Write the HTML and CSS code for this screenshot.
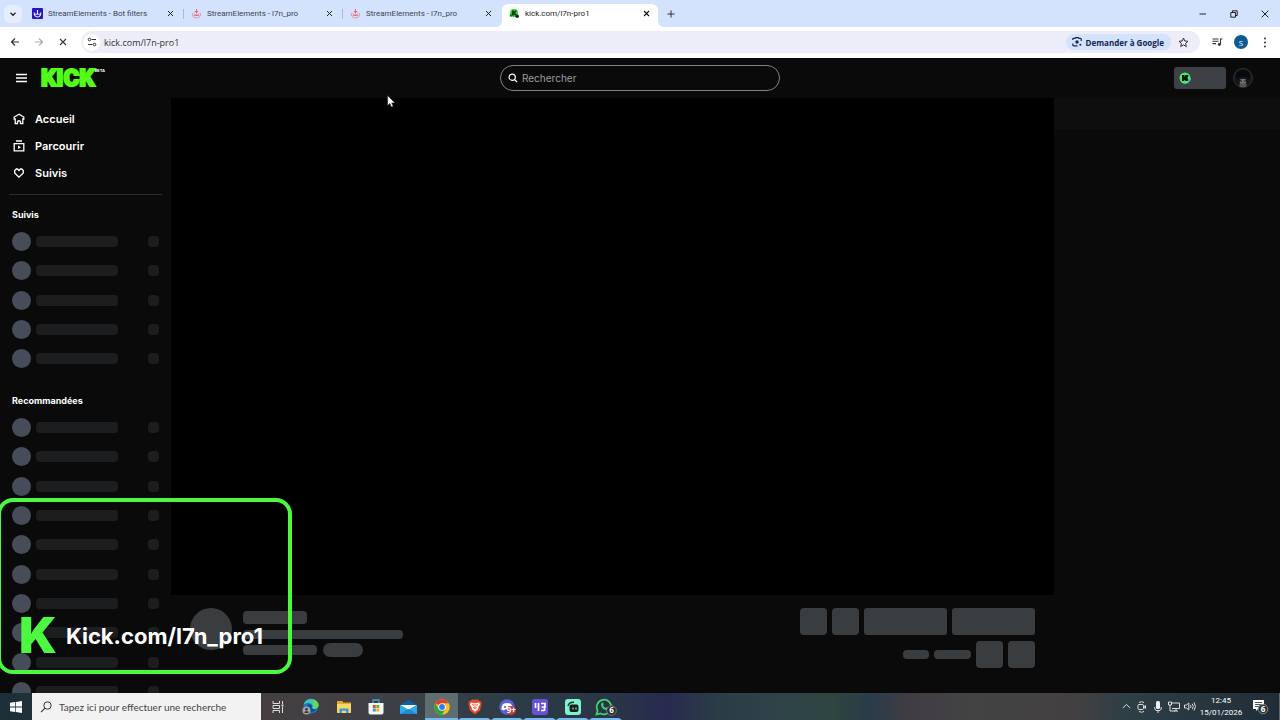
FILE: index.html
```html
<!DOCTYPE html>
<html lang="fr">
<head>
    <meta charset="UTF-8">
    <meta name="viewport" content="width=device-width, initial-scale=1.0">
    <title>kick.com/l7n-pro1</title>
    <link rel="stylesheet" href="styles.css">
</head>
<body>
    <!-- browser tabs -->
    <div class="tabstrip">
        <button class="tab-search" aria-label="Rechercher dans les onglets">
            <svg width="8" height="8" viewBox="0 0 8 8"><path d="M1.5 2.8 4 5.3 6.5 2.8" fill="none" stroke="#222" stroke-width="1.3"/></svg>
        </button>
        <div class="tab">
            <svg width="11" height="11" viewBox="0 0 11 11"><rect width="11" height="11" rx="1" fill="#2a14c4"/><path d="M5.5 2v4M2.4 4.5a3.3 3.3 0 1 0 6.2 0" fill="none" stroke="#fff" stroke-width="1.1"/><path d="M3 6.2h5" stroke="#fff" stroke-width=".9"/></svg>
            <span class="tab-title">StreamElements - Bot filters</span>
            <button class="tab-close" aria-label="Fermer"><svg width="7" height="7" viewBox="0 0 7 7"><path d="M1 1l5 5M6 1L1 6" stroke="#222" stroke-width="1"/></svg></button>
        </div>
        <div class="tab">
            <svg width="11" height="11" viewBox="0 0 11 11"><path d="M5.5 1v4.5M3.8 3.7h3.4" stroke="#ee5a68" stroke-width="1"/><path d="M2.2 4.8C0 7.6 2.5 9.8 5.5 9.8S11 7.6 8.8 4.8" fill="none" stroke="#ee8a94" stroke-width="1"/><path d="M2.8 7.2h5.4" stroke="#ee5a68" stroke-width="1.2"/></svg>
            <span class="tab-title">StreamElements - l7n_pro</span>
            <button class="tab-close" aria-label="Fermer"><svg width="7" height="7" viewBox="0 0 7 7"><path d="M1 1l5 5M6 1L1 6" stroke="#222" stroke-width="1"/></svg></button>
        </div>
        <div class="tab tab-last">
            <svg width="11" height="11" viewBox="0 0 11 11"><path d="M5.5 1v4.5M3.8 3.7h3.4" stroke="#ee5a68" stroke-width="1"/><path d="M2.2 4.8C0 7.6 2.5 9.8 5.5 9.8S11 7.6 8.8 4.8" fill="none" stroke="#ee8a94" stroke-width="1"/><path d="M2.8 7.2h5.4" stroke="#ee5a68" stroke-width="1.2"/></svg>
            <span class="tab-title">StreamElements - l7n_pro</span>
            <button class="tab-close" aria-label="Fermer"><svg width="7" height="7" viewBox="0 0 7 7"><path d="M1 1l5 5M6 1L1 6" stroke="#222" stroke-width="1"/></svg></button>
        </div>
        <div class="tab tab-active">
            <svg width="11" height="11" viewBox="0 0 11 11"><circle cx="5" cy="5" r="4" fill="#2fd636"/><path d="M3 2.5h1.8v1.5L6.5 2.5H8L6.2 5 8 7.5H6L4.8 6v1.5H3z" fill="#0a3a10"/><circle cx="8.2" cy="8.2" r="1.8" fill="#222"/><circle cx="2" cy="7.5" r="1.3" fill="#157a1c"/></svg>
            <span class="tab-title">kick.com/l7n-pro1</span>
            <button class="tab-close" aria-label="Fermer"><svg width="7" height="7" viewBox="0 0 7 7"><path d="M1 1l5 5M6 1L1 6" stroke="#111" stroke-width="1.1"/></svg></button>
        </div>
        <button class="tab-new" aria-label="Nouvel onglet"><svg width="8" height="8" viewBox="0 0 8 8"><path d="M4 .5v7M.5 4h7" stroke="#333" stroke-width="1"/></svg></button>
        <div class="window-buttons">
            <button aria-label="Réduire"><svg width="8" height="8" viewBox="0 0 8 8"><path d="M.5 4h6.5" stroke="#222" stroke-width="1"/></svg></button>
            <button aria-label="Agrandir"><svg width="8" height="8" viewBox="0 0 8 8"><path d="M.8 2.5h4.7v4.7H.8zM2.5 2.5V.8h4.7v4.7H5.5" fill="none" stroke="#222" stroke-width="1"/></svg></button>
            <button aria-label="Fermer"><svg width="8" height="8" viewBox="0 0 8 8"><path d="M.7.7l6.6 6.6M7.3.7L.7 7.3" stroke="#222" stroke-width="1"/></svg></button>
        </div>
    </div>

    <!-- address bar -->
    <div class="toolbar">
        <button aria-label="Retour"><svg width="10" height="10" viewBox="0 0 10 10"><path d="M9 5H1.5M5 1.5L1.5 5 5 8.5" fill="none" stroke="#333" stroke-width="1.2"/></svg></button>
        <button aria-label="Suivant"><svg width="10" height="10" viewBox="0 0 10 10"><path d="M1 5h7.5M5 1.5L8.5 5 5 8.5" fill="none" stroke="#a9abb0" stroke-width="1.2"/></svg></button>
        <button aria-label="Arrêter"><svg width="10" height="10" viewBox="0 0 10 10"><path d="M2 2l6 6M8 2L2 8" stroke="#333" stroke-width="1.1"/></svg></button>
        <div class="omnibox">
            <button class="site-info" aria-label="Informations sur le site"><svg width="10" height="10" viewBox="0 0 10 10"><path d="M4.5 2.5h4.5M1 7.5h4.5" stroke="#333" stroke-width="1.1"/><circle cx="2.500" cy="2.500" r="1.300" fill="none" stroke="#333"/><circle cx="7.500" cy="7.500" r="1.300" fill="none" stroke="#333"/></svg></button>
            <input class="url" type="text" value="kick.com/l7n-pro1" aria-label="Adresse">
            <button class="ask">
                <svg width="10" height="10" viewBox="0 0 10 10"><path d="M.8 3V2.200Q.8 1.300 1.700 1.300H3L3.600.6h2.800L7 1.300h1.300q.9 0 .9.900V4M.8 6.500v1.300q0 1 1 1H5.500" fill="none" stroke="#14264e" stroke-width="1.2"/><circle cx="5" cy="5" r="1.7" fill="#14264e"/><circle cx="8.3" cy="7.8" r="1" fill="#14264e"/></svg>
                <span>Demander à Google</span>
            </button>
            <button class="star" aria-label="Favori"><svg width="11" height="11" viewBox="0 0 11 11"><path d="M5.5 1l1.300 3 3.200.3-2.400 2.100.7 3.200-2.800-1.700-2.800 1.700.7-3.200L1 4.300 4.200 4z" fill="none" stroke="#333" stroke-width="1"/></svg></button>
        </div>
        <button aria-label="Médias"><svg width="11" height="10" viewBox="0 0 11 10"><path d="M.5 2h6M.5 4.300h6M.5 6.600h3.500M8.500 7.500V2h2" fill="none" stroke="#333" stroke-width="1.1"/><circle cx="7.3" cy="7.5" r="1.400" fill="#333"/></svg></button>
        <button class="profile" aria-label="Profil">S</button>
        <button aria-label="Menu"><svg width="4" height="11" viewBox="0 0 4 11"><circle cx="2" cy="1.500" r="1" fill="#333"/><circle cx="2" cy="5.500" r="1" fill="#333"/><circle cx="2" cy="9.500" r="1" fill="#333"/></svg></button>
    </div>

    <!-- page -->
    <div class="page">
        <header class="header">
            <div class="brand">
                <button class="burger" aria-label="Menu"><svg width="11" height="10" viewBox="0 0 11 10"><path d="M0 1.500h11M0 5h11M0 8.500h11" stroke="#fff" stroke-width="1.3"/></svg></button>
                <a class="logo" href="#">KICK</a>
                <span class="beta">BETA</span>
            </div>
            <label class="search">
                <svg width="10" height="10" viewBox="0 0 10 10"><circle cx="4.200" cy="4.200" r="3.100" fill="none" stroke="#fff" stroke-width="1.2"/><path d="M6.500 6.500L9 9" stroke="#fff" stroke-width="1.3"/></svg>
                <input type="text" placeholder="Rechercher" aria-label="Rechercher">
            </label>
            <div class="account">
                <button class="wallet" aria-label="Kicks"><svg width="12" height="12" viewBox="0 0 12 12"><circle cx="6" cy="6" r="5.500" fill="#4be866"/><path d="M2 9.500A5.500 5.500 0 0 0 11.500 6" fill="none" stroke="#42d9c0" stroke-width="1"/><path d="M3 3h2.200v1.500L6.500 3h2.700v2L8 6l1.200 1v2H6.500L5.200 7.500V9H3z" fill="#07140a"/></svg></button>
                <button class="avatar" aria-label="Compte"><svg width="20" height="20" viewBox="0 0 20 20"><circle cx="10" cy="10" r="9.500" fill="#14171b" stroke="#2c3238" stroke-width="1"/><path d="M4 12Q1 3 10 2q9 1 6 10l-3-3H7z" fill="#07090c"/><path d="M7.500 11h5l.8 4-3.300 3-3.300-3z" fill="#77736a"/><path d="M7 12.500l2 1M13 12.500l-2 1" stroke="#17181a" stroke-width="1"/><path d="M6 16.500l4-1.500 4 1.500-1 2.500H7z" fill="#55564c"/></svg></button>
            </div>
        </header>

        <div class="content">
            <aside class="sidebar">
                <nav class="nav">
                    <a href="#"><svg width="12" height="12" viewBox="0 0 12 12"><path d="M6 1.200 1.200 4v2h1v4.700h2.300V8.500q1.500-1.500 3 0v2.200h2.300V6h1V4z" fill="none" stroke="#fff" stroke-width="1.3"/></svg>Accueil</a>
                    <a href="#"><svg width="12" height="12" viewBox="0 0 12 12"><path d="M3 1h6M1.200 3.600h9.600v7.200H1.200z" fill="none" stroke="#fff" stroke-width="1.3"/><path d="M5 5.500v3.400L8 7.200z" fill="#fff"/></svg>Parcourir</a>
                    <a href="#"><svg width="12" height="12" viewBox="0 0 12 12"><path d="M6 10.200 1.700 6V3.500L3.300 2h1.200L6 3.500 7.500 2h1.200l1.600 1.500V6z" fill="none" stroke="#fff" stroke-width="1.3"/></svg>Suivis</a>
                </nav>
                <h2>Suivis</h2>
                <ul class="channels">
                    <li><i></i><b></b><s></s></li>
                    <li><i></i><b></b><s></s></li>
                    <li><i></i><b></b><s></s></li>
                    <li><i></i><b></b><s></s></li>
                    <li><i></i><b></b><s></s></li>
                </ul>
                <h2>Recommandées</h2>
                <ul class="channels">
                    <li><i></i><b></b><s></s></li>
                    <li><i></i><b></b><s></s></li>
                    <li><i></i><b></b><s></s></li>
                    <li><i></i><b></b><s></s></li>
                    <li><i></i><b></b><s></s></li>
                    <li><i></i><b></b><s></s></li>
                    <li><i></i><b></b><s></s></li>
                    <li><i></i><b></b><s></s></li>
                    <li><i></i><b></b><s></s></li>
                    <li><i></i><b></b><s></s></li>
                </ul>
            </aside>

            <main class="main">
                <div class="video"></div>
                <div class="info">
                    <div class="bone streamer"></div>
                    <div class="lines">
                        <div class="bone line-name"></div>
                        <div class="bone line-title"></div>
                        <div class="line-tags">
                            <div class="bone line-category"></div>
                            <div class="bone line-tag"></div>
                        </div>
                    </div>
                    <div class="actions">
                        <div class="action-row">
                            <div class="bone square"></div>
                            <div class="bone square"></div>
                            <div class="bone wide"></div>
                            <div class="bone wide"></div>
                        </div>
                        <div class="action-row">
                            <div class="bone viewers"></div>
                            <div class="bone uptime"></div>
                            <div class="bone square"></div>
                            <div class="bone square"></div>
                        </div>
                    </div>
                </div>
            </main>

            <aside class="chat">
                <div class="chat-head"></div>
            </aside>
        </div>
    </div>

    <!-- windows taskbar -->
    <div class="taskbar">
        <button class="start" aria-label="Démarrer"><svg width="12" height="12" viewBox="0 0 12 12"><path d="M0 1.700 5.300 1v4.600H0zM6 .9 12 0v5.600H6zM0 6.400h5.300V11L0 10.300zM6 6.400h6V12l-6-.9z" fill="#fff"/></svg></button>
        <label class="task-search">
            <svg width="12" height="12" viewBox="0 0 12 12"><circle cx="7.500" cy="4.500" r="3.700" fill="none" stroke="#333" stroke-width="1"/><path d="M5 7.200 1 11.200" stroke="#333" stroke-width="1.1"/></svg>
            <input type="text" placeholder="Tapez ici pour effectuer une recherche" aria-label="Recherche Windows">
        </label>
        <div class="apps">
            <button aria-label="Affichage des tâches"><svg width="12" height="12" viewBox="0 0 12 12"><path d="M1 0v2.500h6.500V0M1 4.500h6.500v3H1zM1 12V9.500h6.500V12M10.500 0v3M10.500 6v6" fill="none" stroke="#ddd" stroke-width="1"/><path d="M9.500 3.500h2v2h-2z" fill="#ddd"/></svg></button>
            <button aria-label="Edge"><svg width="17" height="17" viewBox="0 0 17 17"><circle cx="9" cy="8" r="7.500" fill="#1477c9"/><path d="M1.600 7C3 0 13 -1 16 5c2 4-2 7-6 5 2-3-1-5-4-5-2 0-4 1-4.400 2z" fill="#3fc6b0"/><path d="M12 1.500q6 3 4 7.500-2 3-6 1 2-1 1-3z" fill="#6ad94d"/><path d="M6 6q3 0 4 2-1 4 4 3.500-2 3-6 2.500-4-1-2-8z" fill="#0d4f9b"/><circle cx="4.500" cy="12.500" r="4" fill="#a5a5a5"/><circle cx="4.500" cy="11.300" r="1.300" fill="#333"/><path d="M2.300 15q0-2 2.200-2t2.200 2z" fill="#333"/></svg></button>
            <button aria-label="Explorateur"><svg width="16" height="14" viewBox="0 0 16 14"><path d="M1 1h5l1.500 1.500H15v10H1z" fill="#e6a91f"/><path d="M1 4h14v9H1z" fill="#fbd866"/><path d="M3.500 13V8.500h9V13h-2.300v-2.300H5.800V13z" fill="#3b96dc"/></svg></button>
            <button aria-label="Store"><svg width="16" height="16" viewBox="0 0 16 16"><path d="M5 4V1h6v3" fill="none" stroke="#38a6e4" stroke-width="1.3"/><path d="M.5 4h15v9.500q0 2-2 2h-11q-2 0-2-2z" fill="#f5f5f5"/><path d="M4.800 6h3v3h-3z" fill="#e34f2c"/><path d="M8.300 6h3v3h-3z" fill="#78b22d"/><path d="M4.800 9.500h3v3h-3z" fill="#299de0"/><path d="M8.300 9.500h3v3h-3z" fill="#f3b51e"/></svg></button>
            <button aria-label="Courrier"><svg width="17" height="14" viewBox="0 0 17 14"><path d="M0 5l8.500-5L17 5v9H0z" fill="#0f5ea8"/><path d="M0 5h17l-8.500 5z" fill="#e9f5fd"/><path d="M0 5l8.500 5L17 5v9H0z" fill="#31aae9"/><path d="M0 14l8.500-5L17 14z" fill="#1e8cd2"/></svg></button>
            <button class="running current" aria-label="Chrome"><svg width="16" height="16" viewBox="0 0 16 16"><circle cx="8" cy="8" r="7.800" fill="#fbc318"/><path d="M8 8 1.200 4.200A7.800 7.800 0 0 1 14.800 4.200H8z" fill="#e43e30"/><path d="M1.200 4.200A7.800 7.800 0 0 0 8 15.800l3.300-5.900H4.700z" fill="#2da24c"/><circle cx="8" cy="8" r="3.800" fill="#fff"/><circle cx="8" cy="8" r="2.900" fill="#327ee8"/></svg></button>
            <button class="running" aria-label="Brave"><svg width="14" height="16" viewBox="0 0 14 16"><path d="M4 .5h6l1.500 1.500h1.200l1 2.500-1.600 7L7 15.500 1.900 11.500.3 4.500l1-2.500h1.200z" fill="#ec4527"/><path d="M3 3.500 7 4.200l4-.7 1 2-2 3.500.4 1L7 12.800 3.600 10 4 9 2 5.500z" fill="#fff"/><path d="M4 5.500l2 .8M10 5.500l-2 .8M7 5v4M5 8.500l2 1 2-1" fill="none" stroke="#ec4527" stroke-width=".9"/></svg></button>
            <button class="running" aria-label="Discord"><svg width="17" height="16" viewBox="0 0 17 16"><circle cx="8" cy="8" r="7.700" fill="#5a61d8"/><path d="M4 5q4-2 8 0 2 3 1.500 5.500l-2.500 1-1-1.300H6L5 11.500l-2.500-1Q2 8 4 5z" fill="#fff"/><circle cx="6" cy="8" r="1.100" fill="#5a61d8"/><circle cx="10" cy="8" r="1.100" fill="#5a61d8"/><circle cx="12.300" cy="11.500" r="4.400" fill="#d9393e"/><text class="badge-text" x="12.300" y="14" text-anchor="middle">9+</text></svg></button>
            <button class="running" aria-label="Mixeur"><svg width="16" height="16" viewBox="0 0 16 16"><rect width="16" height="16" rx="3" fill="#6750dc"/><path d="M3.500 4v5M6.500 4v8M9 4.500h4v3.500H9.500M12.500 7.500V12M9 11.500h3" fill="none" stroke="#fff" stroke-width="1.7"/></svg></button>
            <button class="running" aria-label="Streamlabs"><svg width="16" height="16" viewBox="0 0 16 16"><rect width="16" height="16" rx="3" fill="#7ff3d0"/><path d="M3 7q1-4 6-3.800" fill="none" stroke="#12332c" stroke-width="1.4"/><rect x="4.500" y="5.500" width="9" height="7.500" rx="2" fill="#12201d"/><path d="M8 8.500v2M11 8.500v2" stroke="#7ff3d0" stroke-width="1.2"/></svg></button>
            <button class="running" aria-label="WhatsApp"><svg width="22" height="18" viewBox="0 0 22 18"><path d="M1.500 16.500l1.100-4A7.300 7.300 0 1 1 5.500 15.400z" fill="none" stroke="#3fd466" stroke-width="1.7"/><path d="M6.500 5q1-1 1.700.3l.5 1.300-.7 1q1 1.800 2.800 2.500l1-1 1.800.9q.3 1.500-1.500 2.100Q7 12 6 7z" fill="#3fd466"/><circle cx="16.500" cy="12.500" r="4.800" fill="#262b2d" stroke="#888" stroke-width=".8"/><text class="badge-text" x="16.500" y="15.300" text-anchor="middle">6</text></svg></button>
        </div>
        <div class="tray">
            <button aria-label="Icônes cachées"><svg width="9" height="9" viewBox="0 0 9 9"><path d="M.8 6 4.500 2.500 8.200 6" fill="none" stroke="#ddd" stroke-width="1"/></svg></button>
            <button aria-label="Caméra"><svg width="10" height="12" viewBox="0 0 10 12"><rect x="1" y="3.500" width="5.500" height="5" rx="1" fill="none" stroke="#ddd"/><path d="M6.500 6l2-1.500v3zM2 1.500q2.500-1.500 5 0M2 10.500q2.500 1.500 5 0" fill="none" stroke="#ddd"/></svg></button>
            <button aria-label="Micro"><svg width="8" height="12" viewBox="0 0 8 12"><rect x="2" y="0" width="4" height="8" rx="1.500" fill="#eee"/><path d="M.8 6v2l1.200 1.500h4L7.200 8V6M4 9.500V12" fill="none" stroke="#ddd"/></svg></button>
            <button aria-label="Réseau"><svg width="12" height="11" viewBox="0 0 12 11"><path d="M4 2h7.500v5.500H4M2 4v6h5M8 7.500V10M6 10h4" fill="none" stroke="#ddd"/><path d="M.5 1h3v3h-3z" fill="none" stroke="#ddd"/></svg></button>
            <button aria-label="Volume"><svg width="12" height="11" viewBox="0 0 12 11"><path d="M.5 4h2l2.300-2v7L2.500 7h-2zM6.500 4q1 1.500 0 3M8.300 2.800q2 2.700 0 5.400M10 1.500q3 4 0 8" fill="none" stroke="#ddd"/></svg></button>
            <div class="clock"><time>12:45</time><time>15/01/2026</time></div>
            <button class="notif" aria-label="Notifications"><svg width="17" height="17" viewBox="0 0 17 17"><path d="M1 2h11v9H6l-2 2v-2H1z" fill="#fff"/><path d="M3 4.500h7M3 6.500h7M3 8.500h4" stroke="#334249" stroke-width=".9"/><circle cx="11" cy="11" r="4.800" fill="#2a3438" stroke="#999" stroke-width=".8"/><text class="badge-text" x="11" y="13.800" text-anchor="middle">6</text></svg></button>
        </div>
    </div>

    <!-- stream overlay -->
    <div class="overlay">
        <span class="overlay-mark">K</span>
        <span class="overlay-text">Kick.com/l7n_pro1</span>
    </div>

    <svg class="cursor" width="9" height="13" viewBox="0 0 9 13"><path d="M.6.600v10l2.300-2.100 1.500 3.600 1.800-.8-1.500-3.400h3.300z" fill="#fff" stroke="#222" stroke-width=".6"/></svg>
</body>
</html>
```
FILE: styles.css
```css
* {
    box-sizing: border-box;
}
body {
    margin: 0;
    height: 100vh;
    display: flex;
    flex-direction: column;
    position: relative;
    overflow: hidden;
    background-color: #0a0a0a;
    font-family: "Open Sans", sans-serif;
}
button {
    display: flex;
    align-items: center;
    justify-content: center;
    flex-shrink: 0;
    padding: 0;
    border: none;
    background: none;
    font-family: inherit;
    cursor: pointer;
}
input {
    min-width: 0;
    padding: 0;
    border: none;
    outline: none;
    background: none;
    font-family: inherit;
}
svg {
    display: block;
    flex-shrink: 0;
}
a {
    text-decoration: none;
}

/* browser */
.tabstrip {
    display: flex;
    align-items: center;
    flex-shrink: 0;
    height: 27px;
    padding-left: 4px;
    background-color: #d3e2fd;
}
.tab-search {
    width: 18px;
    height: 18px;
    margin-right: 3px;
    border-radius: 6px;
    background-color: #e6eefe;
}
.tab {
    display: flex;
    align-items: center;
    gap: 5px;
    position: relative;
    width: 159px;
    height: 22px;
    padding: 0 10px 0 7px;
}
.tab::after {
    content: "";
    position: absolute;
    right: 0;
    width: 1px;
    height: 10px;
    background-color: #a9b9d6;
}
.tab-last::after {
    display: none;
}
.tab-title {
    flex: 1;
    font-family: Roboto, sans-serif;
    font-size: 8px;
    color: #3d4350;
    white-space: nowrap;
}
.tab-close {
    width: 7px;
    height: 7px;
}
.tab-active {
    align-self: flex-end;
    width: 156px;
    height: 23px;
    padding-right: 8px;
    padding-bottom: 4px;
    border-radius: 6px 6px 0 0;
    background-color: #fff;
}
.tab-active .tab-title {
    color: #222;
}
.tab-active::before,
.tab-active::after {
    content: "";
    position: absolute;
    bottom: 0;
    width: 6px;
    height: 6px;
}
.tab-active::before {
    left: -6px;
    background: radial-gradient(circle at 0 0, #d3e2fd 6px, #fff 6px);
}
.tab-active::after {
    right: -6px;
    background: radial-gradient(circle at 100% 0, #d3e2fd 6px, #fff 6px);
}
.tab-new {
    width: 18px;
    height: 18px;
    margin-left: 4px;
}
.window-buttons {
    display: flex;
    margin-left: auto;
}
.window-buttons button {
    width: 31px;
    height: 27px;
}
.toolbar {
    display: flex;
    align-items: center;
    flex-shrink: 0;
    height: 31px;
    padding: 0 3px 1px;
    background-color: #fff;
}
.toolbar > button {
    width: 24px;
    height: 24px;
}
.omnibox {
    display: flex;
    align-items: center;
    flex: 1;
    height: 22px;
    margin: 0 5px 0 6px;
    padding: 0 11px 0 2px;
    border-radius: 11px;
    background-color: #ecedf9;
}
.site-info {
    width: 17px;
    height: 17px;
    border-radius: 50%;
    background-color: #fff;
}
.url {
    flex: 1;
    margin-left: 4px;
    font-size: 9px;
    color: #333;
}
.ask {
    gap: 4px;
    height: 16px;
    padding: 0 7px 0 6px;
    border-radius: 8px;
    background-color: #d3e2fd;
    font-size: 8px;
    font-weight: 700;
    color: #14264e;
}
.star {
    margin-left: 7px;
}
.toolbar .profile {
    width: 14px;
    height: 14px;
    margin: 0 5px;
    border-radius: 50%;
    background-color: #0b5a94;
    font-size: 8px;
    color: #fff;
}

/* kick */
.page {
    flex: 1;
    min-height: 0;
    overflow: hidden;
    font-family: Inter, sans-serif;
    color: #fff;
}
.header {
    display: grid;
    grid-template-columns: 1fr 280px 1fr;
    align-items: center;
    height: 40px;
}
.brand {
    display: flex;
    align-items: center;
    padding-left: 16px;
}
.burger {
    margin-right: 14px;
}
.logo {
    font-family: Roboto, sans-serif;
    font-size: 24px;
    font-weight: 900;
    line-height: 24px;
    color: #53fc18;
    -webkit-text-stroke: 2px #53fc18;
}
.beta {
    align-self: flex-start;
    margin-top: 2px;
    font-size: 4px;
    font-weight: 700;
    line-height: 5px;
}
.search {
    display: flex;
    align-items: center;
    gap: 4px;
    height: 26px;
    padding: 0 7px;
    border: 1px solid #808284;
    border-radius: 13px;
}
.search input {
    flex: 1;
    font-size: 10px;
    color: #fff;
}
.search input::placeholder {
    color: #9b9da0;
}
.account {
    display: flex;
    align-items: center;
    justify-content: flex-end;
    gap: 7px;
    padding-right: 27px;
}
.wallet {
    justify-content: flex-start;
    width: 52px;
    height: 22px;
    padding-left: 5px;
    border-radius: 3px;
    background-color: #3d4045;
}
.content {
    display: flex;
    align-items: flex-start;
}
.sidebar {
    width: 171px;
    flex-shrink: 0;
    padding: 7px 9px 0;
}
.nav {
    padding-bottom: 8px;
    border-bottom: 1px solid #2b2d2f;
}
.nav a {
    display: flex;
    align-items: center;
    gap: 10px;
    height: 27px;
    padding-left: 4px;
    font-size: 11px;
    font-weight: 600;
    color: #fff;
}
.sidebar h2 {
    margin: 12px 3px 4px;
    font-size: 9px;
    font-weight: 700;
    line-height: 16px;
}
.channels {
    display: grid;
    grid-auto-rows: 29px 29px 30px;
    margin: 0 0 20px;
    padding: 0 3px;
    list-style: none;
}
.channels li {
    display: flex;
    align-items: center;
}
.channels i {
    width: 19px;
    height: 19px;
    border-radius: 50%;
    background-color: #474c59;
}
.channels b {
    width: 82px;
    height: 11px;
    margin-left: 5px;
    border-radius: 4px;
    background-color: #1c1d1f;
}
.channels s {
    width: 11px;
    height: 11px;
    margin-left: auto;
    border-radius: 4px;
    background-color: #1c1d1f;
}
.main {
    flex: 1;
}
.video {
    aspect-ratio: 16 / 9;
    background-color: #000;
}
.info {
    display: flex;
    align-items: flex-start;
    padding: 13px 19px;
}
.bone {
    border-radius: 4px;
    background-color: #3a3d3f;
}
.streamer {
    width: 42px;
    height: 42px;
    border-radius: 50%;
}
.lines {
    flex: 1;
    margin: 3px 0 0 11px;
}
.line-name {
    width: 64px;
    height: 13px;
}
.line-title {
    width: 160px;
    height: 9px;
    margin: 6px 0 4px;
}
.line-tags {
    display: flex;
    align-items: center;
    gap: 6px;
}
.line-category {
    width: 74px;
    height: 10px;
}
.line-tag {
    width: 40px;
    height: 14px;
    border-radius: 7px;
}
.actions {
    display: flex;
    flex-direction: column;
    gap: 6px;
}
.action-row {
    display: flex;
    align-items: center;
    justify-content: flex-end;
    gap: 5px;
}
.square {
    width: 27px;
    height: 27px;
}
.wide {
    width: 83px;
    height: 27px;
    border-radius: 3px;
}
.viewers {
    width: 26px;
    height: 9px;
}
.uptime {
    width: 37px;
    height: 9px;
}
.chat {
    width: 226px;
    flex-shrink: 0;
}
.chat-head {
    height: 31px;
    background-color: #0e0e0e;
}

/* taskbar */
.taskbar {
    display: flex;
    flex-shrink: 0;
    height: 27px;
    background: linear-gradient(90deg, #1b2f38 0, #453f41 20%, #433f42 25%, #3a4046 32%, #2c3c46 40%, #293547 48%, #272b50 52%, #2a3c45 56%, #2f4349 61%, #2e4540 65%, #2a3c48 68%, #403c44 71%, #434343 76%, #434041 84%, #2e3f46 88%, #1f2d38 100%);
}
.start {
    width: 32px;
}
.task-search {
    display: flex;
    align-items: center;
    gap: 7px;
    width: 229px;
    padding-left: 8px;
    background-color: #f2f2f2;
}
.task-search input {
    flex: 1;
    font-family: Lato, sans-serif;
    font-size: 10px;
}
.task-search input::placeholder {
    color: #444;
}
.apps {
    display: grid;
    grid-auto-flow: column;
    grid-auto-columns: 33px 33px 33px 32px;
}
.running {
    border-bottom: 2px solid #76b9ed;
    border-left: 3px solid transparent;
    border-right: 3px solid transparent;
    padding-top: 2px;
}
.current {
    border-left: none;
    border-right: none;
    background-color: #5d6d70;
}
.badge-text {
    font-family: "Open Sans", sans-serif;
    font-size: 8px;
    font-weight: 700;
    fill: #fff;
}
.tray {
    display: flex;
    margin-left: auto;
    padding-right: 2px;
    border-right: 1px solid #5b676d;
}
.tray button {
    width: 16px;
}
.clock {
    display: flex;
    flex-direction: column;
    align-items: center;
    justify-content: center;
    width: 46px;
    font-family: Roboto, sans-serif;
    font-size: 8px;
    line-height: 12px;
    color: #fff;
}
.tray .notif {
    width: 33px;
}

/* overlay */
.overlay {
    position: absolute;
    left: -3px;
    bottom: 46px;
    display: flex;
    align-items: flex-end;
    width: 295px;
    height: 176px;
    padding: 0 18px 11px;
    gap: 9px;
    border: 4px solid #4cf840;
    border-radius: 16px;
    font-family: Inter, sans-serif;
    pointer-events: none;
}
.overlay-mark {
    font-size: 50px;
    font-weight: 900;
    line-height: 48px;
    color: #4cf840;
}
.overlay-text {
    font-size: 22px;
    font-weight: 700;
    line-height: 46px;
    color: #fff;
}
.cursor {
    position: absolute;
    left: 387px;
    top: 95px;
}
```
